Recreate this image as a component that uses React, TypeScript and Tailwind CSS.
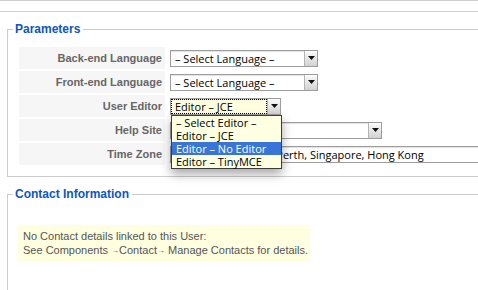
import React from "react";

const selectFont = "font-['Open_Sans',sans-serif] text-[11px] text-black";

const Arrow = () => (
  <span className="flex h-full w-[13px] shrink-0 items-center justify-center border-l border-[#b4b4b4] bg-linear-to-b from-[#fbfbfb] to-[#d2d2d2]">
    <svg width="7" height="4" viewBox="0 0 7 4">
      <path d="M0 0h7L3.5 4z" fill="#111" />
    </svg>
  </span>
);

const Select = ({
  className,
  value,
  focused = false,
  arrow = true,
}: {
  className: string;
  value: string;
  focused?: boolean;
  arrow?: boolean;
}) => (
  <div
    className={`flex h-[17px] items-stretch border border-[#9d9d9d] shadow-[inset_0_1px_1px_rgba(0,0,0,0.12)] ${
      focused ? "bg-[#ffffe0]" : "bg-white"
    } ${className}`}
  >
    <span
      className={`flex flex-1 items-center overflow-hidden whitespace-nowrap pl-[4px] leading-none ${selectFont} ${
        focused ? "outline-1 outline-dotted outline-black -outline-offset-1" : ""
      }`}
    >
      {value}
    </span>
    {arrow && <Arrow />}
  </div>
);

const options = ["– Select Editor –", "Editor – JCE", "Editor – No Editor", "Editor – TinyMCE"];

const EditorSelect = () => (
  <div className="relative w-[111px]">
    <Select className="w-[111px]" value="Editor – JCE" focused />
    <ul className="absolute left-[1px] top-full z-10 w-[111px] border border-[#3c3c3c] bg-[#ffffe1] shadow-[0_5px_10px_rgba(0,0,0,0.35)]">
      {options.map((o) => (
        <li
          key={o}
          className={`h-[13px] whitespace-nowrap pl-[4px] text-[11.5px] leading-[13px] ${selectFont} ${
            o === "Editor – No Editor" ? "bg-[#3875d7] text-white" : ""
          }`}
        >
          {o}
        </li>
      ))}
    </ul>
  </div>
);

const rows: { label: string; field: React.ReactNode }[] = [
  { label: "Back-end Language", field: <Select className="w-[148px]" value="– Select Language –" /> },
  { label: "Front-end Language", field: <Select className="w-[148px]" value="– Select Language –" /> },
  { label: "User Editor", field: <EditorSelect /> },
  { label: "Help Site", field: <Select className="w-[212px]" value="" /> },
  {
    label: "Time Zone",
    field: (
      <Select
        className="h-[16px] w-[340px]"
        value="(UTC 08:00) Beijing, Perth, Singapore, Hong Kong"
        arrow={false}
      />
    ),
  },
];

const SmallArrow = () => (
  <span className="relative top-[-1px] text-[8px] leading-none">→</span>
);

export default function App() {
  return (
    <div className="h-[290px] w-[478px] overflow-hidden bg-white font-['Liberation_Sans',Arial,sans-serif]">
      <div className="h-[12px] w-full border-y border-[#cfcfcf]" />

      <fieldset className="ml-[7px] mt-[10px] w-[520px] border border-[#cccccc] pb-[11px] pl-[5px] pt-[11px]">
        <legend className="px-[2px] pr-[3px] text-[12px] font-bold leading-[14px] text-[#0b55c4]">
          Parameters
        </legend>
        <div className="ml-[6px] grid grid-cols-[146px_1fr] gap-[2px]">
          {rows.map((r) => (
            <React.Fragment key={r.label}>
              <div className="flex h-[22px] items-center justify-end bg-[#f6f6f6] pr-[3px] text-[11px] font-bold text-[#666666]">
                {r.label}
              </div>
              <div className="flex h-[22px] items-center pl-[3px]">{r.field}</div>
            </React.Fragment>
          ))}
        </div>
      </fieldset>

      <fieldset className="ml-[7px] mt-[10px] h-[120px] w-[520px] border border-[#cccccc] pl-[5px] pt-[24px]">
        <legend className="px-[2px] pr-[3px] text-[12px] font-bold leading-[14px] text-[#0b55c4]">
          Contact Information
        </legend>
        <div className="ml-[5px] w-[292px] whitespace-nowrap bg-[#ffffe0] px-[5px] pb-[5px] pt-[4px] text-[11px] leading-[14px] text-[#555555]">
          <div>No Contact details linked to this User:</div>
          <div>
            See Components <SmallArrow />Contact<SmallArrow /> Manage Contacts for details.
          </div>
        </div>
      </fieldset>
    </div>
  );
}
